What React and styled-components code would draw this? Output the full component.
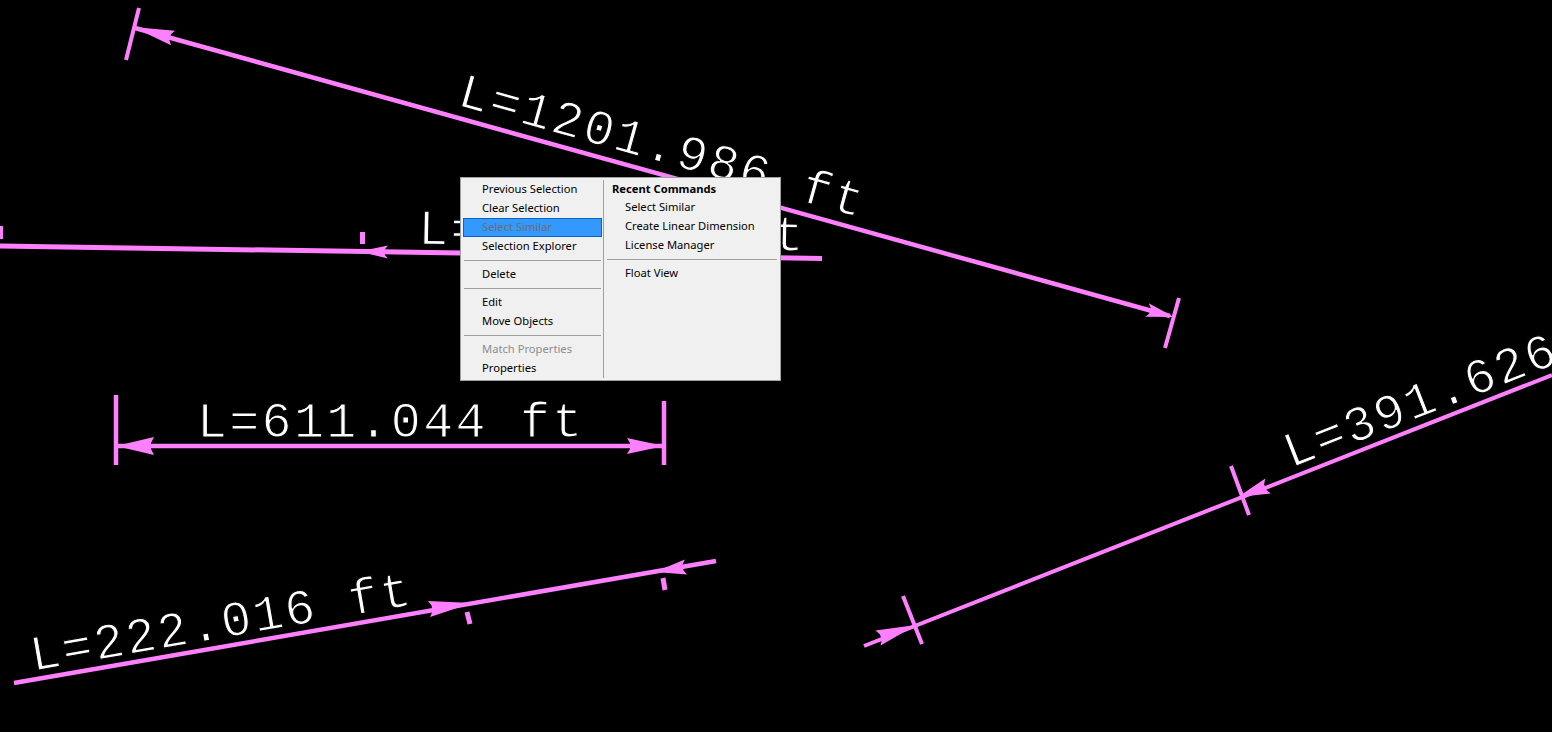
import styled, { createGlobalStyle } from "styled-components";

const INK = "#ff80ff";

const GlobalStyle = createGlobalStyle`
  html, body {
    margin: 0;
    background: #000;
    overflow: hidden;
  }
`;

const Viewport = styled.div`
  position: relative;
  width: 1552px;
  height: 732px;
  background: #000;
  overflow: hidden;
`;

const Drawing = styled.svg`
  display: block;
`;

// black outline eats into the glyphs so they read as thin plotter strokes
const Label = styled.text`
  font-family: "Liberation Mono", monospace;
  font-size: 50px;
  letter-spacing: 2.3px;
  fill: #fff;
  stroke: #000;
  stroke-width: 1.1px;
  paint-order: fill;
`;

const Menu = styled.div`
  position: absolute;
  left: 460px;
  top: 177px;
  width: 321px;
  height: 204px;
  box-sizing: border-box;
  display: grid;
  grid-template-columns: 140px 1fr;
  padding: 2px;
  background: #f0f0f0;
  border: 1px solid #a0a0a0;
  font-family: "Noto Sans", sans-serif;
  font-size: 11.2px;
  color: #000;
`;

const Column = styled.div`
  display: flex;
  flex-direction: column;
`;

const RightColumn = styled(Column)`
  border-left: 1px solid #a0a0a0;
  padding-left: 3px;
`;

const Row = styled.div`
  height: ${({ $compact }) => ($compact ? 18 : 19)}px;
  line-height: 17px;
  box-sizing: border-box;
  padding-left: ${({ $indent }) => $indent}px;
  white-space: nowrap;
  font-weight: ${({ $heading }) => ($heading ? 700 : 400)};
  color: ${({ $disabled }) => ($disabled ? "#8d8d8d" : "#000")};
`;

const ActiveRow = styled(Row)`
  margin-right: 1px;
  line-height: 15px;
  background: #3399ff;
  border: 1px solid #0a64c0;
  padding-left: 18px;
  color: #6d6d6d;
`;

const Separator = styled.div`
  height: 9px;
  margin: 0 ${({ $right }) => $right}px 0 ${({ $left }) => $left}px;
  flex: none;
  display: flex;
  align-items: center;

  &::before {
    content: "";
    width: 100%;
    height: 1px;
    background: #a0a0a0;
  }
`;

// a wedge from tip back to the base, notched slightly where it meets the line
function Arrow({ tip, base, half }) {
  const dx = base[0] - tip[0];
  const dy = base[1] - tip[1];
  const len = Math.hypot(dx, dy);
  const ux = dx / len;
  const uy = dy / len;
  const nx = -uy;
  const ny = ux;
  const points = [
    tip,
    [base[0] + nx * half, base[1] + ny * half],
    [base[0] - ux * 3 + nx * 3, base[1] - uy * 3 + ny * 3],
    [base[0] - ux * 3 - nx * 3, base[1] - uy * 3 - ny * 3],
    [base[0] - nx * half, base[1] - ny * half],
  ];
  return <polygon points={points.map((p) => p.join(",")).join(" ")} fill={INK} />;
}

const dimensions = [
  {
    line: [135, 28, 1170, 316, 4.5],
    ticks: [[139, 8, 126, 60], [1179, 298, 1165, 348]],
    arrows: [
      { tip: [133, 27], base: [173, 38], half: 7.5 },
      { tip: [1174, 317], base: [1147, 310], half: 7 },
    ],
  },
  {
    line: [0, 246, 822, 258.5, 5],
    ticks: [[1.5, 226, 1.5, 239, 3], [362.5, 232, 362.5, 244, 5]],
    arrows: [{ tip: [359, 251.5], base: [388, 252], half: 6.5 }],
  },
  {
    line: [116, 446, 664, 446, 4.5],
    ticks: [[116, 395, 116, 465, 4.5], [664, 401, 664, 465, 4.5]],
    arrows: [
      { tip: [116, 446], base: [154, 446], half: 9 },
      { tip: [664, 446], base: [627, 446], half: 8 },
    ],
  },
  {
    line: [864, 646, 1552, 375, 4],
    ticks: [[903, 596, 922, 644], [1231, 466, 1249, 515]],
    arrows: [
      { tip: [916, 625], base: [878, 638], half: 8 },
      { tip: [1238, 497], base: [1268, 486], half: 8 },
    ],
  },
  {
    line: [14, 683, 716, 561, 4.5],
    ticks: [[467, 612, 470, 624, 5], [663, 578, 665, 590, 5]],
    arrows: [
      { tip: [472, 603], base: [429, 609], half: 8 },
      { tip: [655, 572], base: [686, 567], half: 7.5 },
    ],
  },
];

const labels = [
  { text: "L=1201.986 ft", x: 456, y: 105, angle: 15.6 },
  { text: "L=472.118 ft", x: 418, y: 244, angle: 1 },
  { text: "L=611.044 ft", x: 197, y: 437, angle: 0 },
  { text: "L=391.626 ft", x: 1291, y: 468, angle: -21.4 },
  { text: "L=222.016 ft", x: 33, y: 671, angle: -9.9 },
];

function Dimension({ line, ticks, arrows }) {
  const [x1, y1, x2, y2, width] = line;
  return (
    <g stroke={INK} strokeLinecap="butt">
      <line x1={x1} y1={y1} x2={x2} y2={y2} strokeWidth={width} />
      {ticks.map(([a, b, c, d, w = 4], i) => (
        <line key={i} x1={a} y1={b} x2={c} y2={d} strokeWidth={w} />
      ))}
      <g stroke="none">
        {arrows.map((arrow, i) => (
          <Arrow key={i} {...arrow} />
        ))}
      </g>
    </g>
  );
}

export default function App() {
  return (
    <>
      <GlobalStyle />
      <Viewport>
        <Drawing width="1552" height="732" viewBox="0 0 1552 732">
          {dimensions.map((d, i) => (
            <Dimension key={i} {...d} />
          ))}
          {labels.map(({ text, x, y, angle }) => (
            <Label key={text} x={x} y={y} transform={`rotate(${angle} ${x} ${y})`}>
              {text}
            </Label>
          ))}
        </Drawing>

        <Menu>
          <Column>
            <Row $indent={19}>Previous Selection</Row>
            <Row $indent={19}>Clear Selection</Row>
            <ActiveRow>Select Similar</ActiveRow>
            <Row $indent={19}>Selection Explorer</Row>
            <Separator $left={1} $right={2} />
            <Row $indent={19}>Delete</Row>
            <Separator $left={1} $right={2} />
            <Row $indent={19}>Edit</Row>
            <Row $indent={19}>Move Objects</Row>
            <Separator $left={1} $right={2} />
            <Row $indent={19} $disabled>Match Properties</Row>
            <Row $indent={19}>Properties</Row>
          </Column>
          <RightColumn>
            <Row $indent={5} $compact $heading>Recent Commands</Row>
            <Row $indent={18}>Select Similar</Row>
            <Row $indent={18}>Create Linear Dimension</Row>
            <Row $indent={18}>License Manager</Row>
            <Separator $left={0} $right={1} />
            <Row $indent={18}>Float View</Row>
          </RightColumn>
        </Menu>
      </Viewport>
    </>
  );
}
